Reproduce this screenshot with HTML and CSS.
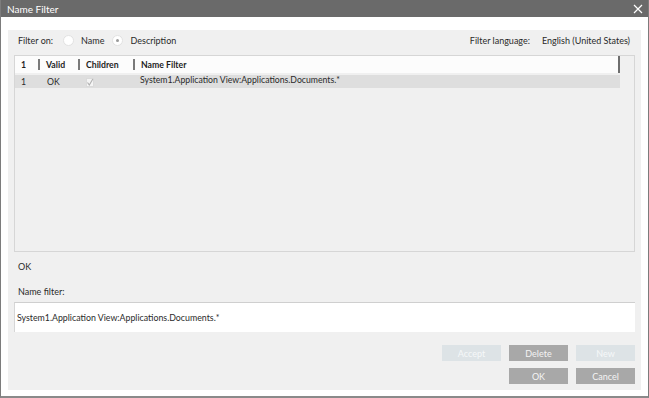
FILE: index.html
```html
<!DOCTYPE html>
<html>
<head>
  <meta charset="UTF-8">
  <title>Name Filter</title>
  <link rel="stylesheet" href="styles.css">
</head>
<body>
  <div class="window">
    <div class="titlebar">
      <span class="title">Name Filter</span>
      <svg class="close" width="10" height="10" viewBox="0 0 10 10">
        <path d="M1 1 L9 9 M9 1 L1 9" stroke="#fff" stroke-width="1.2" fill="none" />
      </svg>
    </div>

    <div class="content">
      <div class="panel">
        <div class="filter-row">
          <div class="filter-on">
            <span class="label">Filter on:</span>
            <span class="radio"></span>
            <span class="opt">Name</span>
            <span class="radio checked"></span>
            <span class="opt">Description</span>
          </div>
          <div class="filter-lang">
            <span class="label">Filter language:</span>
            <span>English (United States)</span>
          </div>
        </div>

        <div class="table">
          <div class="list">
            <div class="head">
              <div class="cell c1">1</div>
              <div class="cell c2">Valid</div>
              <div class="cell c3">Children</div>
              <div class="cell c4">Name Filter</div>
            </div>
            <div class="row">
              <div class="cell c1">1</div>
              <div class="cell c2">OK</div>
              <div class="cell c3">
                <svg class="check" width="8" height="9" viewBox="0 0 8 9">
                  <rect x="0.5" y="0.5" width="7" height="8" fill="#f4f4f4" stroke="#dadada" />
                  <path d="M1.5 4.5 L3.3 7 L6.8 1" stroke="#b0b0b0" stroke-width="1.1" fill="none" />
                </svg>
              </div>
              <div class="cell c4 top">System1.Application View:Applications.Documents.*</div>
            </div>
          </div>
        </div>

        <div class="status">OK</div>
        <div class="field-label">Name filter:</div>
        <div class="input">System1.Application View:Applications.Documents.*</div>

        <div class="buttons">
          <div class="btn-row">
            <div class="btn disabled">Accept</div>
            <div class="btn">Delete</div>
            <div class="btn disabled">New</div>
          </div>
          <div class="btn-row">
            <div class="btn">OK</div>
            <div class="btn">Cancel</div>
          </div>
        </div>
      </div>
    </div>
  </div>
</body>
</html>
```

FILE: styles.css
```css
* {
  box-sizing: border-box;
  padding: 0;
  margin: 0;
}

body {
  font-family: Lato, "Open Sans", sans-serif;
  font-size: 9px;
  color: #2a2a2a;
  background: #fff;
}

.window {
  width: 649px;
  height: 398px;
  border-left: 1px solid #7c7c7c;
  border-right: 1px solid #7c7c7c;
  border-bottom: 2px solid #8a8a8a;
  background: #fff;
  display: flex;
  flex-direction: column;
}

.titlebar {
  height: 17px;
  background: #6a6a6a;
  display: flex;
  align-items: center;
  justify-content: space-between;
  padding: 0 5px 0 6px;
  flex-shrink: 0;
}

.title {
  color: #fff;
  font-size: 10px;
}

.content {
  flex: 1;
  padding: 13px 7px 6px 7px;
  display: flex;
}

.panel {
  flex: 1;
  background: #f0f0f0;
  padding: 0 6px;
  display: flex;
  flex-direction: column;
}

.filter-row {
  height: 20px;
  margin-bottom: 5px;
  display: flex;
  align-items: center;
  justify-content: space-between;
  padding: 0 5px 0 4px;
}

.filter-on,
.filter-lang {
  display: flex;
  align-items: center;
}

.filter-on .label {
  margin-right: 10px;
}

.filter-lang .label {
  margin-right: 12px;
}

.radio {
  width: 11px;
  height: 11px;
  border-radius: 50%;
  background: #fff;
  border: 1px solid #e2e2e2;
  margin-right: 7px;
  display: flex;
  align-items: center;
  justify-content: center;
}

.radio.checked::after {
  content: "";
  width: 3px;
  height: 3px;
  border-radius: 50%;
  background: #9a9a9a;
}

.opt {
  margin-right: 8px;
}

.table {
  height: 197px;
  border: 1px solid #d6d6d6;
  flex-shrink: 0;
  font-size: 8.7px;
}

.list {
  width: calc(100% - 14px);
}

.head,
.row {
  display: grid;
  grid-template-columns: 23px 40px 55px 1fr;
  align-items: center;
}

.head {
  height: 17px;
  background: #fcfcfc;
  font-weight: bold;
  color: #1e1e1e;
  border-right: 2px solid #6e6e6e;
  margin-bottom: 2px;
}

.head .cell {
  height: 11px;
  line-height: 11px;
}

.head .c2,
.head .c3,
.head .c4 {
  border-left: 2px solid #7a7a7a;
}

.cell {
  padding-left: 6px;
  white-space: nowrap;
}

.row {
  height: 13px;
  background: #dedede;
}

.row .c2 {
  padding-left: 9px;
}

.row .c3 {
  padding-left: 8px;
  display: flex;
  align-items: center;
  padding-top: 2px;
}

.row .c4.top {
  align-self: start;
  padding-left: 7px;
  line-height: 9px;
}

.check {
  display: block;
}

.status {
  height: 30px;
  line-height: 12px;
  padding: 9px 0 0 4px;
}

.field-label {
  height: 20px;
  line-height: 12px;
  padding: 4px 0 0 4px;
}

.input {
  height: 30px;
  background: #fff;
  border-top: 1px solid #cfcfcf;
  border-left: 1px solid #d6d6d6;
  padding-left: 2px;
  display: flex;
  align-items: center;
  flex-shrink: 0;
  font-size: 8.8px;
}

.buttons {
  margin-top: 13px;
  display: flex;
  flex-direction: column;
  align-items: flex-end;
  gap: 7px;
}

.btn-row {
  display: flex;
  gap: 8px;
}

.btn {
  width: 59px;
  height: 16px;
  background: #a8a8a8;
  color: #f4f4f4;
  display: flex;
  align-items: center;
  justify-content: center;
}

.btn.disabled {
  background: #dde3e6;
  color: #f6f8f9;
}
```
